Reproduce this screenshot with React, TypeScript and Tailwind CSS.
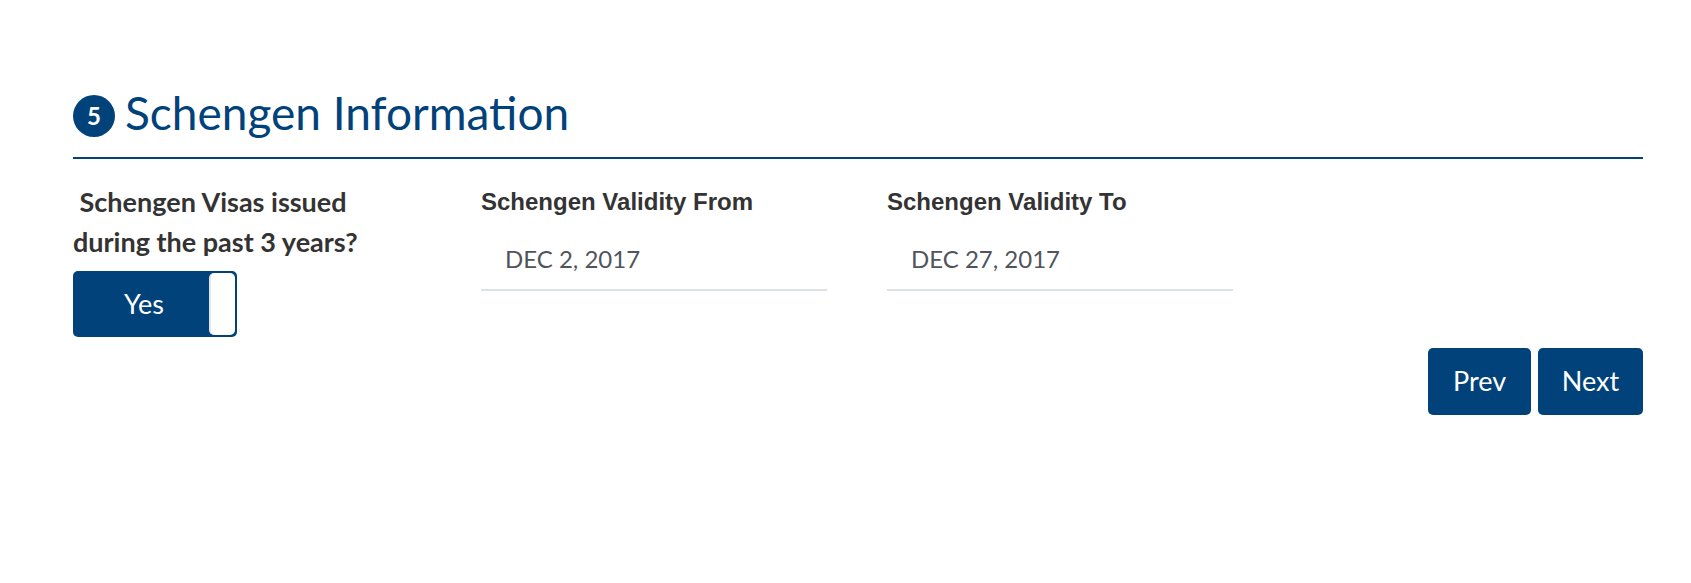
import React from 'react';

const navy = 'bg-[#02427a]';

const DateField: React.FC<{ label: string; value: string }> = ({ label, value }) => (
  <div className="w-[346px]">
    <div className="mt-[8px] font-['Liberation_Sans',Arial,sans-serif] text-[24px] font-bold text-[#333] leading-[24px]">
      {label}
    </div>
    <div className="mt-[30px] border-b-2 border-[#dde1e5] pl-[24px] pb-[15px] text-[24px] leading-[30px] text-[#50555b]">
      {value}
    </div>
  </div>
);

export default function App() {
  return (
    <div className="min-h-screen bg-white font-['Lato','Noto_Sans',sans-serif] pl-[73px] pr-[48px] pt-[89px]">
      <div className="flex items-center gap-[10px]">
        <div className={`mt-[6px] w-[42px] h-[42px] rounded-full ${navy} text-white flex items-center justify-center text-[24px] font-bold`}>
          5
        </div>
        <h2 className="text-[46px] leading-[48px] text-[#02427a] font-normal">Schengen Information</h2>
      </div>
      <div className="mt-[20px] border-b-2 border-[#02427a]" />

      <div className="flex mt-[23px]">
        <div className="w-[408px]">
          <div className="text-[27px] font-bold text-[#333] leading-[40px]">
            &nbsp;Schengen Visas issued
            <br />
            during the past 3 years?
          </div>
          <div className={`mt-[9px] w-[164px] h-[66px] rounded-[5px] ${navy} flex items-center p-[2px]`}>
            <span className="flex-1 text-center text-white text-[27px] pl-[4px]">Yes</span>
            <span className="w-[26px] h-full rounded-[5px] bg-white border-l-2 border-[#e3e6ea]" />
          </div>
        </div>
        <div className="w-[406px]">
          <DateField label="Schengen Validity From" value="DEC 2, 2017" />
        </div>
        <DateField label="Schengen Validity To" value="DEC 27, 2017" />
      </div>

      <div className="flex justify-end gap-[7px] mt-[11px]">
        <button className={`w-[103px] h-[67px] rounded-[5px] ${navy} text-white text-[27px]`}>Prev</button>
        <button className={`w-[105px] h-[67px] rounded-[5px] ${navy} text-white text-[27px]`}>Next</button>
      </div>
    </div>
  );
}
